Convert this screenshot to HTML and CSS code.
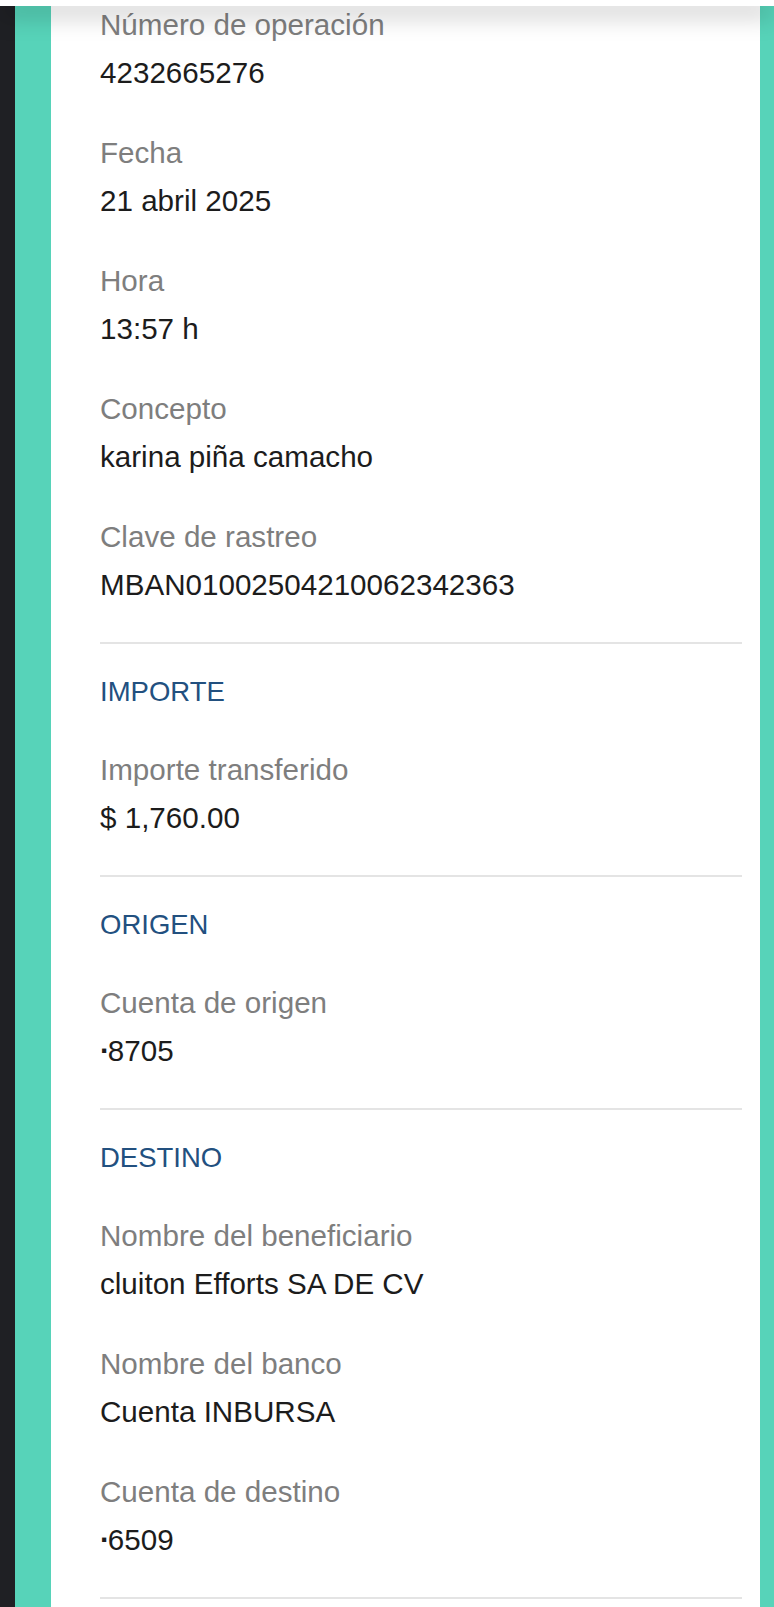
FILE: index.html
```html
<!DOCTYPE html>
<html lang="es">

<head>
    <meta charset="UTF-8">
    <meta name="viewport" content="width=device-width, initial-scale=1.0">
    <title>Comprobante de transferencia</title>
    <link rel="stylesheet" href="styles.css">
</head>

<body>

    <!-- Barra superior con sombra -->
    <div class="top-bar"></div>

    <div class="frame">
        <main class="ticket">

            <!-- Datos de la operación -->
            <section class="group first">
                <div class="field">
                    <span class="label">Número de operación</span>
                    <span class="value">4232665276</span>
                </div>
                <div class="field">
                    <span class="label">Fecha</span>
                    <span class="value">21 abril 2025</span>
                </div>
                <div class="field">
                    <span class="label">Hora</span>
                    <span class="value">13:57 h</span>
                </div>
                <div class="field">
                    <span class="label">Concepto</span>
                    <span class="value">karina piña camacho</span>
                </div>
                <div class="field">
                    <span class="label">Clave de rastreo</span>
                    <span class="value">MBAN01002504210062342363</span>
                </div>
            </section>

            <section class="group">
                <h2 class="group-title">IMPORTE</h2>
                <div class="field">
                    <span class="label">Importe transferido</span>
                    <span class="value">$ 1,760.00</span>
                </div>
            </section>

            <section class="group">
                <h2 class="group-title">ORIGEN</h2>
                <div class="field">
                    <span class="label">Cuenta de origen</span>
                    <span class="value"><span class="dot">·</span>8705</span>
                </div>
            </section>

            <section class="group">
                <h2 class="group-title">DESTINO</h2>
                <div class="field">
                    <span class="label">Nombre del beneficiario</span>
                    <span class="value">cluiton Efforts SA DE CV</span>
                </div>
                <div class="field">
                    <span class="label">Nombre del banco</span>
                    <span class="value">Cuenta INBURSA</span>
                </div>
                <div class="field">
                    <span class="label">Cuenta de destino</span>
                    <span class="value"><span class="dot">·</span>6509</span>
                </div>
            </section>

        </main>
    </div>

</body>

</html>
```

FILE: styles.css
```css
/* Style global */
body, html {
    margin: 0;
    padding: 0;
    font-family: "Liberation Sans", Arial, sans-serif;
    background-color: #1f2024;
}

/* Barre du haut, posée au-dessus du contenu */
.top-bar {
    position: fixed;
    top: 0;
    left: 0;
    right: 0;
    height: 6px;
    background-color: #fff;
    box-shadow: 0 6px 24px rgba(0, 0, 0, 0.5);
    z-index: 2;
}

/* Cadre vert autour du ticket */
.frame {
    margin-left: 15px;
    padding: 0 14px 0 36px;
    background-color: #57d3b9;
    min-height: 100vh;
    display: flex;
}

.ticket {
    flex: 1;
    background-color: #fff;
    padding: 1px 18px 0 49px;
}

/* Groupes de champs */
.group {
    display: flex;
    flex-direction: column;
    gap: 32px;
    padding: 26px 0 33px;
    border-bottom: 2px solid #e4e4e4;
}

.group.first {
    padding-top: 0;
}

.group-title {
    margin: 0;
    font-size: 27.5px;
    font-weight: normal;
    line-height: 44px;
    color: #22507f;
}

.field {
    display: flex;
    flex-direction: column;
}

.field .label {
    font-size: 29.6px;
    line-height: 48px;
    color: #7e7e7e;
}

.field .value {
    font-size: 29.6px;
    line-height: 48px;
    color: #1c1c1c;
}

/* Point devant les numéros de compte */
.field .dot {
    font-weight: bold;
    letter-spacing: -2px;
}
```
